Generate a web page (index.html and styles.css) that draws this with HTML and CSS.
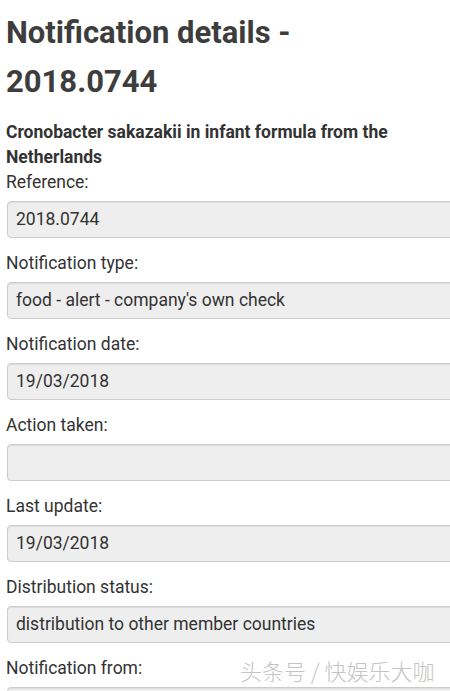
FILE: index.html
```html
<!DOCTYPE html>
<html lang="en">
<head>
<meta charset="utf-8">
<title>Notification details - 2018.0744</title>
<link rel="stylesheet" href="styles.css">
</head>
<body>
<div class="page">
  <h1 class="title">Notification details - 2018.0744</h1>
  <p class="subject">Cronobacter sakazakii in infant formula from the Netherlands</p>
  <div class="field">
    <div class="label">Reference:</div>
    <div class="box">2018.0744</div>
  </div>
  <div class="field">
    <div class="label">Notification type:</div>
    <div class="box">food - alert - company's own check</div>
  </div>
  <div class="field">
    <div class="label">Notification date:</div>
    <div class="box">19/03/2018</div>
  </div>
  <div class="field">
    <div class="label">Action taken:</div>
    <div class="box"></div>
  </div>
  <div class="field">
    <div class="label">Last update:</div>
    <div class="box">19/03/2018</div>
  </div>
  <div class="field">
    <div class="label">Distribution status:</div>
    <div class="box">distribution to other member countries</div>
  </div>
  <div class="field">
    <div class="label">Notification from:</div>
    <div class="box"></div>
  </div>
</div>
<div class="watermark">头条号 / 快娱乐大咖</div>
</body>
</html>
```

FILE: styles.css
```css
html, body {
  margin: 0;
  padding: 0;
  background: #ffffff;
  overflow: hidden;
  height: 691px;
}

body {
  font-family: Roboto, "Liberation Sans", Arial, sans-serif;
  color: #333333;
  position: relative;
}

.page {
  width: 480px;
  padding: 8px 0 0 6px;
}

.title {
  margin: 0;
  font-size: 31px;
  font-weight: 700;
  line-height: 49px;
  color: #3d3d3d;
  width: 300px;
}

.subject {
  margin: 14px 0 0 0;
  font-size: 17.5px;
  font-weight: 700;
  line-height: 25px;
  color: #333333;
  width: 420px;
}

.field {
  margin-bottom: 13px;
}

.label {
  font-size: 17.5px;
  line-height: 25px;
  color: #333333;
}

.box {
  margin-top: 6px;
  margin-left: 1px;
  height: 37px;
  box-sizing: border-box;
  border: 1px solid #cccccc;
  border-radius: 4px;
  background: #eeeeee;
  box-shadow: inset 0 1px 1px rgba(0, 0, 0, 0.075);
  padding: 0 8px;
  font-size: 17.5px;
  line-height: 35px;
  color: #333333;
}

.watermark {
  position: absolute;
  left: 240px;
  top: 655px;
  font-family: "Noto Sans CJK SC", sans-serif;
  font-weight: 300;
  font-size: 22px;
  line-height: 30px;
  color: #c4c4c4;
  text-shadow: 0 0 1px #ffffff, 1px 1px 0 #ffffff, -1px -1px 0 #ffffff;
  white-space: nowrap;
}
```
